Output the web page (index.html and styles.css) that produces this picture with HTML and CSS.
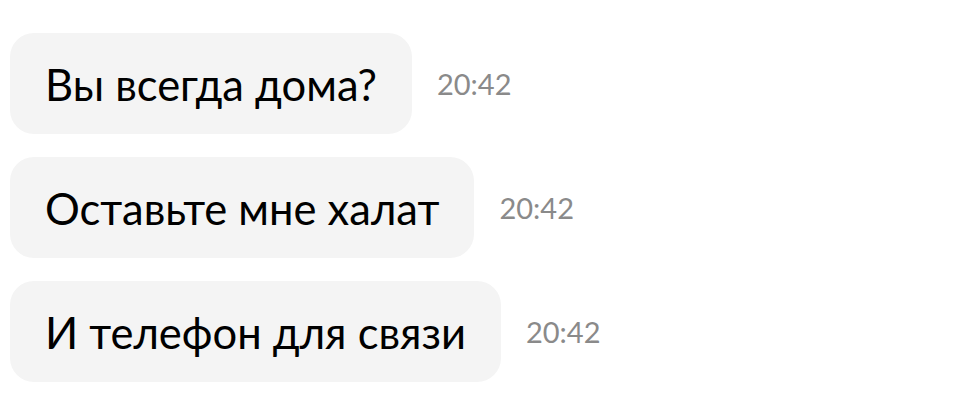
FILE: index.html
```html
<!DOCTYPE html>
<html lang="ru">
<head>
    <meta charset="UTF-8">
    <meta name="viewport" content="width=device-width, initial-scale=1.0">
    <title>Чат</title>
    <link rel="stylesheet" href="styles.css">
</head>
<body>
    <div class="chat">
        <div class="message">
            <div class="bubble">Вы всегда дома?</div>
            <span class="time">20:42</span>
        </div>
        <div class="message">
            <div class="bubble">Оставьте мне халат</div>
            <span class="time">20:42</span>
        </div>
        <div class="message">
            <div class="bubble">И телефон для связи</div>
            <span class="time">20:42</span>
        </div>
    </div>
</body>
</html>
```

FILE: styles.css
```css
body {
    margin: 0;
    background-color: #ffffff;
    font-family: Lato, "Noto Sans", sans-serif;
}

.chat {
    display: flex;
    flex-direction: column;
    gap: 23px;
    padding: 33px 10px 0;
}

.message {
    display: flex;
    align-items: center;
    gap: 25px;
}

.bubble {
    background-color: #f4f4f4;
    border-radius: 24px;
    padding: 0 35px;
    height: 101px;
    display: flex;
    align-items: center;
    font-size: 43.5px;
    color: #000000;
}

.time {
    font-size: 29px;
    color: #8a8a8a;
}
```
